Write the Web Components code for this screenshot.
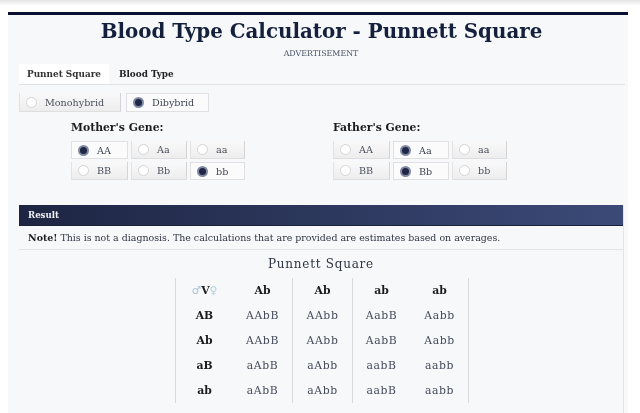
<!DOCTYPE html>
<html>
<head>
<meta charset="utf-8">
<style>
  html, body { margin: 0; padding: 0; background: #fff; height: 413px; overflow: hidden; }
  body { font-family: "DejaVu Serif", serif; color: #222; }
  .top-shade { height: 6px; background: linear-gradient(#e4e4e4, #fff); }
</style>
</head>
<body>
<div class="top-shade"></div>
<calc-page>
  <h-title slot="title">Blood Type Calculator - Punnett Square</h-title>
</calc-page>

<script>
// tabs under the heading
class CalcTabs extends HTMLElement {
  constructor() {
    super();
    const shadow = this.attachShadow({ mode: "open" });
    shadow.innerHTML = `
      <style>
        :host { display: flex; margin: 0 3px 0 11px; border-bottom: 1px solid #e0e2e6; height: 20px; font-size: 8.9px; font-weight: bold; }
        div { display: flex; align-items: center; color: #333; }
        .on { width: 90px; justify-content: center; background: #fff; }
        .off { margin-left: 10px; color: #222; }
      </style>
      <div class="on">Punnet Square</div>
      <div class="off">Blood Type</div>
    `;
  }
}
customElements.define("calc-tabs", CalcTabs);

// one radio styled as a button
class RadioBtn extends HTMLElement {
  constructor() {
    super();
    const shadow = this.attachShadow({ mode: "open" });
    shadow.innerHTML = `
      <style>
        :host {
          display: flex; align-items: center; box-sizing: border-box;
          height: var(--rb-h, 18px); width: var(--rb-w, auto);
          padding-left: var(--rb-pad, 6px);
          background: linear-gradient(#f9f9f9, #ededed);
          border-left: 1px solid #e2e2e2; border-right: 1px solid #d4d4d4; border-bottom: 1px solid #dedede;
          font-size: var(--rb-size, 9.6px); color: #4a4f5c;
        }
        :host([checked]) { background: #fbfbfc; border: 1px solid #e0e0e2; color: #3f4450; }
        i { flex: none; width: 11px; height: 11px; border-radius: 50%; background: #fff; border: 1px solid #d4d4d4; box-sizing: border-box; margin-right: var(--rb-gap, 8px); }
        :host([checked]) i { background: #1f2744; border: 2px solid #8089a3; }
      </style>
      <i></i><slot></slot>
    `;
  }
}
customElements.define("radio-btn", RadioBtn);

// mother / father gene block
class GeneBox extends HTMLElement {
  constructor() {
    super();
    const shadow = this.attachShadow({ mode: "open" });
    shadow.innerHTML = `
      <style>
        :host { display: block; width: 175px; }
        h3 { margin: 0 0 7px; font-size: 10.8px; line-height: 13px; font-weight: bold; color: #1c1c1c; }
        .grid { display: grid; grid-template-columns: 57px 56px 55px; column-gap: 3px; row-gap: 3px; }
      </style>
      <h3><slot name="head"></slot></h3>
      <div class="grid"><slot></slot></div>
    `;
  }
}
customElements.define("gene-box", GeneBox);

// dark bar plus the note line
class ResultBar extends HTMLElement {
  constructor() {
    super();
    const shadow = this.attachShadow({ mode: "open" });
    shadow.innerHTML = `
      <style>
        :host { display: block; }
        .bar { height: 21px; display: flex; align-items: center; padding-left: 9px; box-sizing: border-box; font-size: 8.6px; font-weight: bold; color: #f2f3f7; background: linear-gradient(90deg, #1d2542, #3c4a78); border-bottom: 1px solid #1b2238; }
        .note { height: 23px; display: flex; align-items: center; padding-left: 9px; border-bottom: 1px solid #e2e4e8; font-size: 9.45px; color: #2f3542; white-space: pre; }
        b { color: #1c1c1c; }
      </style>
      <div class="bar">Result</div>
      <div class="note"><b>Note!</b> This is not a diagnosis. The calculations that are provided are estimates based on averages.</div>
    `;
  }
}
customElements.define("result-bar", ResultBar);

class PunnettTable extends HTMLElement {
  constructor() {
    super();
    const shadow = this.attachShadow({ mode: "open" });
    const head = ["Ab", "Ab", "ab", "ab"];
    const rows = [
      ["AB", "AAbB", "AAbb", "AabB", "Aabb"],
      ["Ab", "AAbB", "AAbb", "AabB", "Aabb"],
      ["aB", "aAbB", "aAbb", "aabB", "aabb"],
      ["ab", "aAbB", "aAbb", "aabB", "aabb"],
    ];
    let html = `<div class="c h line sym"><span class="m">♂</span>V<span class="f">♀</span></div>`;
    head.forEach((t, i) => { html += `<div class="c h ${i > 0 && i < 3 ? "line" : ""}">${t}</div>`; });
    rows.forEach((r) => {
      r.forEach((t, i) => {
        const cls = i === 0 ? "c h line" : "c" + (i === 2 || i === 3 ? " line" : "");
        html += `<div class="${cls}">${t}</div>`;
      });
    });
    shadow.innerHTML = `
      <style>
        :host { display: block; }
        h4 { margin: 0; height: 28px; display: flex; align-items: center; justify-content: center; font-size: 12px; font-weight: normal; letter-spacing: .75px; color: #2f3542; }
        .t { display: grid; grid-template-columns: 58px 59px 60px 58px 59px; grid-auto-rows: 25px; width: 294px; margin-left: 156px; border-right: 1px solid #d6d9de; box-sizing: border-box; }
        .c { display: flex; align-items: center; justify-content: center; font-size: 10.8px; color: #454b5a; letter-spacing: .6px; }
        .line { border-left: 1px solid #d6d9de; }
        .h { font-weight: bold; color: #1c1c1c; font-size: 10.8px; letter-spacing: 0; }
        .sym { color: #222; }
        .m { color: #a9c0d2; font-weight: normal; }
        .f { color: #b0d0de; font-weight: normal; }
      </style>
      <h4>Punnett Square</h4>
      <div class="t">${html}</div>
    `;
  }
}
customElements.define("punnett-table", PunnettTable);

class HTitle extends HTMLElement {
  constructor() {
    super();
    const shadow = this.attachShadow({ mode: "open" });
    shadow.innerHTML = `
      <style>
        :host { display: block; text-align: center; font-size: 19.85px; line-height: 24px; font-weight: bold; color: #14203c; padding: 4px 0 0 7px; }
      </style>
      <slot></slot>
    `;
  }
}
customElements.define("h-title", HTitle);

// whole calculator card
class CalcPage extends HTMLElement {
  constructor() {
    super();
    const shadow = this.attachShadow({ mode: "open" });
    shadow.innerHTML = `
      <style>
        :host { display: block; box-sizing: border-box; margin: 6px 12px 0 8px; height: 407px; background: #f6f8fa; border-top: 3px solid #0a1030; filter: blur(.5px); overflow: hidden; }
        .ad { text-align: center; font-size: 7.9px; line-height: 8px; margin-top: 7px; height: 14px; padding-left: 6px; color: #4a5364; }
        .mode { display: flex; gap: 5px; margin: 8px 0 0 11px; --rb-h: 19px; --rb-pad: 6px; }
        .mode radio-btn:first-child { --rb-w: 102px; --rb-gap: 8px; }
        .mode radio-btn:last-child { --rb-w: 83px; --rb-gap: 8px; }
        .genes { display: flex; margin: 9px 0 0 63px; gap: 87px; }
        .result { margin: 25px 4px 0 11px; border-right: 1px solid #e2e4e8; height: 212px; }
      </style>
      <slot name="title"></slot>
      <div class="ad">ADVERTISEMENT</div>
      <calc-tabs></calc-tabs>
      <div class="mode">
        <radio-btn>Monohybrid</radio-btn>
        <radio-btn checked>Dibybrid</radio-btn>
      </div>
      <div class="genes">
        <gene-box>
          <span slot="head">Mother's Gene:</span>
          <radio-btn checked>AA</radio-btn><radio-btn>Aa</radio-btn><radio-btn>aa</radio-btn>
          <radio-btn>BB</radio-btn><radio-btn>Bb</radio-btn><radio-btn checked>bb</radio-btn>
        </gene-box>
        <gene-box>
          <span slot="head">Father's Gene:</span>
          <radio-btn>AA</radio-btn><radio-btn checked>Aa</radio-btn><radio-btn>aa</radio-btn>
          <radio-btn>BB</radio-btn><radio-btn checked>Bb</radio-btn><radio-btn>bb</radio-btn>
        </gene-box>
      </div>
      <div class="result">
        <result-bar></result-bar>
        <punnett-table></punnett-table>
      </div>
    `;
  }
}
customElements.define("calc-page", CalcPage);
</script>
</body>
</html>
